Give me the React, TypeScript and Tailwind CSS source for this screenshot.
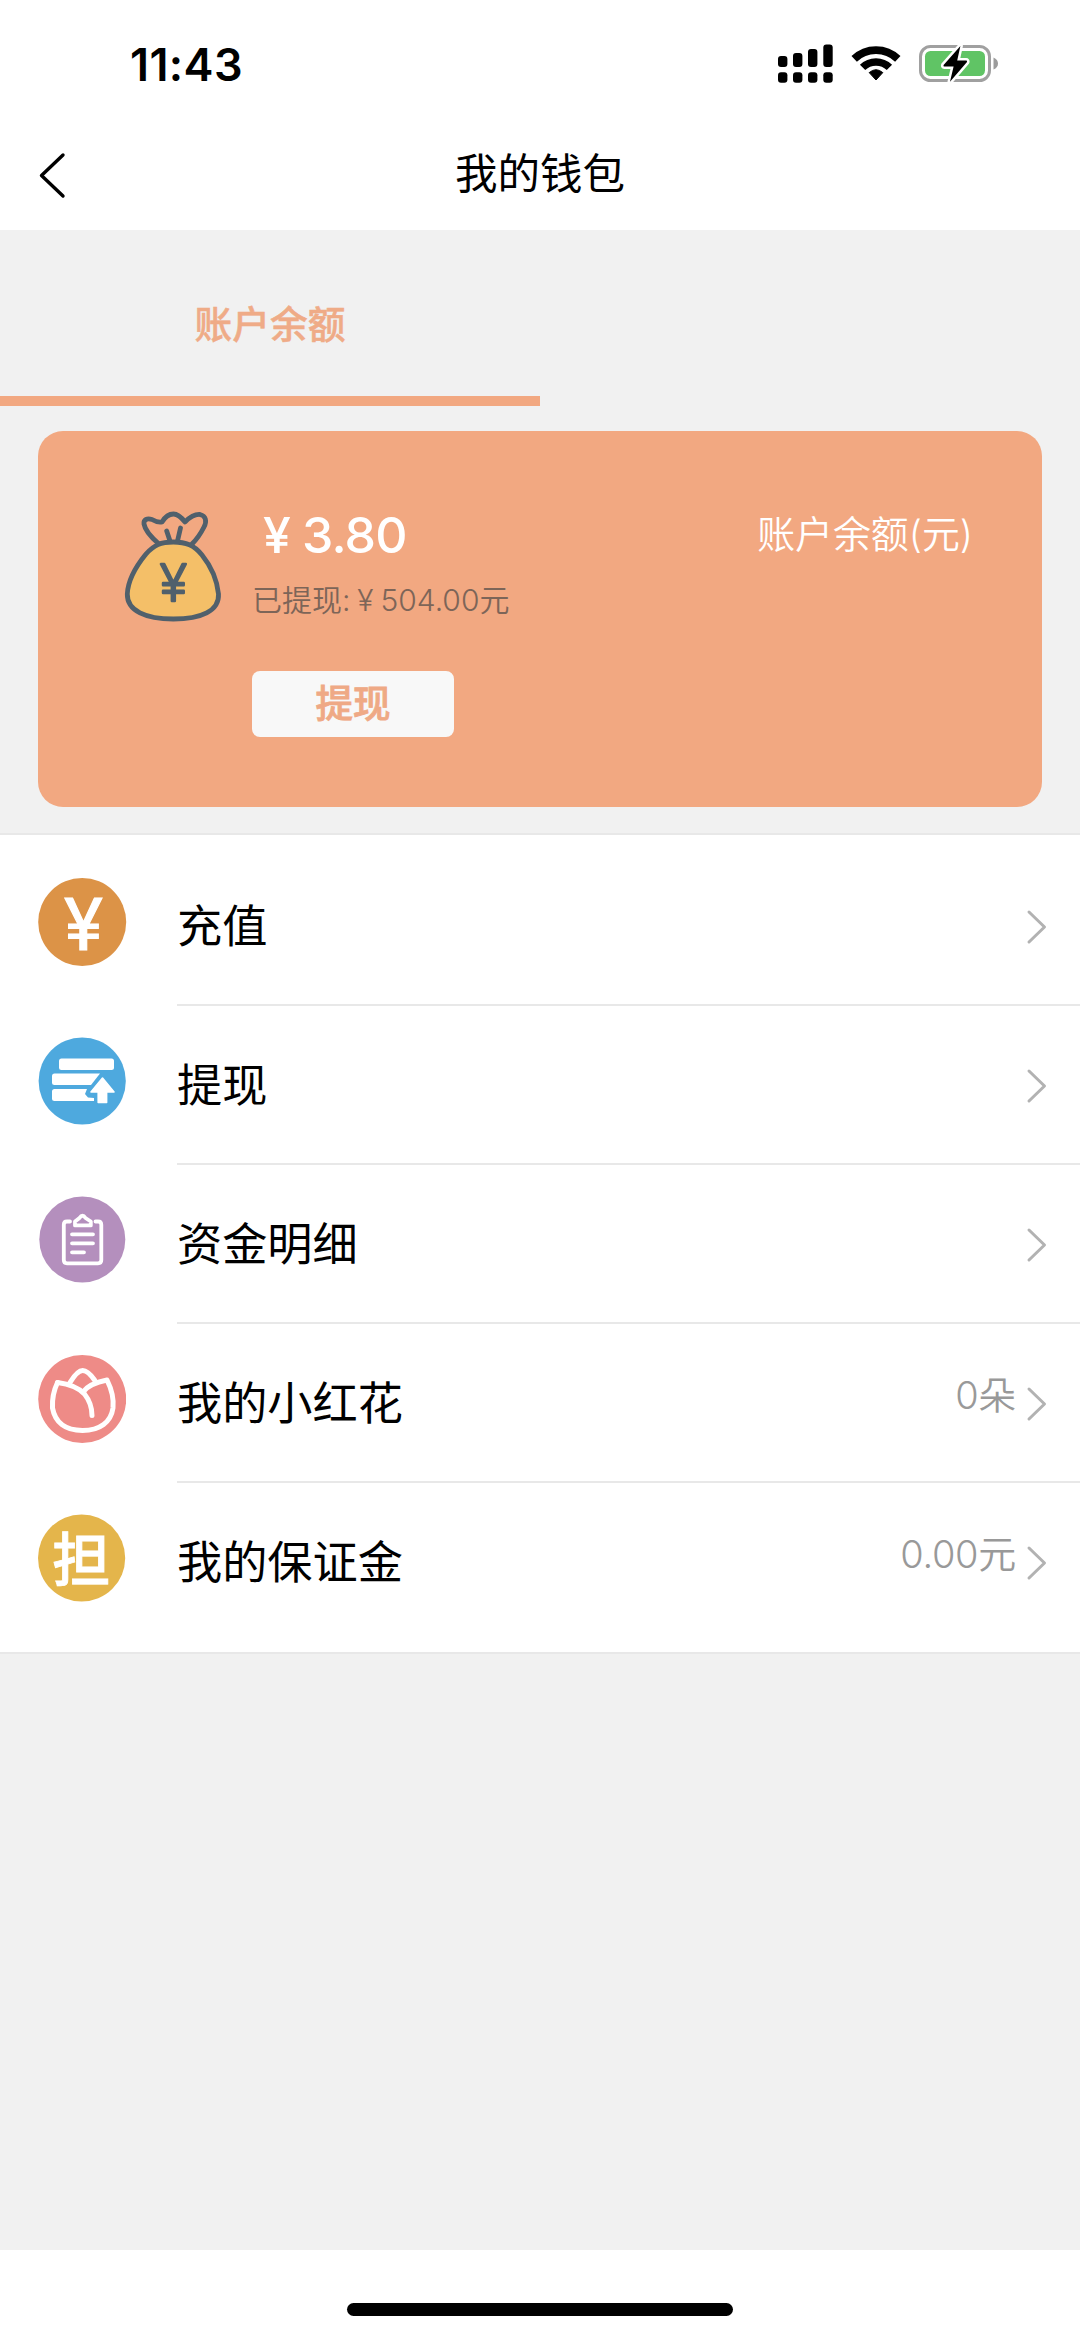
import type { ReactNode } from "react";

type WalletItem = {
  id: string;
  label: string;
  icon: ReactNode;
  value?: string;
};

function SignalIcon() {
  return (
    <svg width="56" height="40" viewBox="0 0 56 40" fill="#000">
      <rect x="0" y="12" width="9.4" height="11" rx="3" />
      <rect x="15" y="9" width="9.4" height="14" rx="3" />
      <rect x="30" y="5" width="9.4" height="18" rx="3" />
      <rect x="45.3" y="0.5" width="9.4" height="22.5" rx="3" />
      <rect x="0" y="28.3" width="9.4" height="10.4" rx="3" />
      <rect x="15" y="28.3" width="9.4" height="10.4" rx="3" />
      <rect x="30" y="28.3" width="9.4" height="10.4" rx="3" />
      <rect x="45.3" y="28.3" width="9.4" height="10.4" rx="3" />
    </svg>
  );
}

function WifiIcon() {
  return (
    <svg width="50" height="40" viewBox="0 0 50 40" fill="none" stroke="#000">
      <path d="M3.2 14.9 A31.5 31.5 0 0 1 46.8 14.9" strokeWidth="7.8" />
      <path d="M11.6 23.4 A19.2 19.2 0 0 1 38.4 23.4" strokeWidth="7.6" />
      <path
        d="M18.2 28.6 Q25 22.8 31.8 28.6 L25 36 Z"
        fill="#000"
        strokeWidth="1"
        strokeLinejoin="round"
      />
    </svg>
  );
}

function BatteryIcon() {
  return (
    <svg width="80" height="40" viewBox="0 0 80 40" fill="none">
      <rect
        x="1.5"
        y="2.5"
        width="69"
        height="34"
        rx="10"
        stroke="#a0a0a0"
        strokeWidth="3"
      />
      <rect x="6" y="7" width="60" height="25" rx="5.5" fill="#60c465" />
      <path d="M74.5 13.5 Q79 15.5 79 19.5 Q79 23.5 74.5 25.5 Z" fill="#9c9c9c" />
      <path
        d="M41.4 2 L24.6 21 Q24 22.6 25.4 22.6 L34.6 22.6 L31 37.8 L48 18 Q48.4 16.6 47 16.6 L38.2 16.6 Z"
        fill="#000"
        stroke="#fff"
        strokeWidth="5"
        strokeLinejoin="round"
        paintOrder="stroke"
      />
    </svg>
  );
}

function MoneyBagIcon() {
  return (
    <svg
      width="100"
      height="114"
      viewBox="0 0 100 114"
      fill="none"
      stroke="#50606c"
      strokeWidth="4.8"
      strokeLinecap="round"
      strokeLinejoin="round"
    >
      <path d="M35 34 C28 28 21 20 20 14 C19.5 9.5 23 8 28 9.5 Q34 13 38 12 C41 7 45 4 49.5 4 C54 4 57 7 61 12 C65 8 70 4 76 4.5 C82 6 83 11 80 17 Q75 27 68 34" />
      <path d="M42.7 21 L46 31 M56.5 18 L53.5 31" />
      <path
        d="M49.3 32 C37 32 30 35 22 44 C13 55 4 69 3.3 84 C3 101 22 109 49.3 109 C77 109 95.5 101 94.5 84 C93 69 86 55 78 45 C70 35 62 32 49.3 32 Z"
        fill="#f4bf68"
      />
      <text
        x="49.3"
        y="91"
        textAnchor="middle"
        fill="#50606c"
        strokeWidth="2.4"
        fontSize="51"
        fontWeight="300"
        className="font-['Roboto',sans-serif]"
      >
        ¥
      </text>
    </svg>
  );
}

function RechargeIcon() {
  return (
    <svg className="overflow-visible" width="88" height="88" viewBox="0 0 88 88">
      <circle cx="44.2" cy="44" r="44" fill="#dc9347" />
      <text
        x="45.4"
        y="71.5"
        textAnchor="middle"
        fill="#fff"
        stroke="#fff"
        strokeWidth="1.1"
        fontSize="73"
        fontWeight="400"
        className="font-['Roboto',sans-serif]"
      >
        ¥
      </text>
    </svg>
  );
}

function WithdrawIcon() {
  return (
    <svg width="88" height="88" viewBox="0 0 88 88" fill="#fff">
      <circle cx="44.2" cy="44" r="43.6" fill="#4ea9de" />
      <rect x="21" y="21.5" width="55" height="11.5" rx="2.5" />
      <path d="M16.5 36.5 H62 L53 48 H16.5 Q14 48 14 45.5 V39 Q14 36.5 16.5 36.5 Z" />
      <path d="M16.5 52 H49 L47 57 L50 60.5 L56 61 V64 H16.5 Q14 64 14 61.5 V54.5 Q14 52 16.5 52 Z" />
      <path
        d="M64.5 41 L76 55 H68.6 V65.5 H60.2 V55 H53 Z"
        stroke="#fff"
        strokeWidth="1.6"
        strokeLinejoin="round"
      />
    </svg>
  );
}

function DetailIcon() {
  return (
    <svg
      width="88"
      height="88"
      viewBox="0 0 88 88"
      fill="none"
      stroke="#fff"
      strokeWidth="3.8"
      strokeLinecap="round"
      strokeLinejoin="round"
    >
      <circle cx="44.3" cy="43.5" r="43" fill="#b48fbd" stroke="none" />
      <path d="M32 25.5 H29 Q25.8 25.5 25.8 28.8 V64 Q25.8 67.3 29 67.3 H60 Q63.3 67.3 63.3 64 V28.8 Q63.3 25.5 60 25.5 H57.5" />
      <path d="M37 29.4 V25.5 L41.5 22 Q44.5 17.5 47.5 22 L52.8 25.5 V29.4 Z" />
      <path d="M34 38.3 H55 M34 47.3 H55 M34 56.3 H46" />
    </svg>
  );
}

function FlowerIcon() {
  return (
    <svg
      width="88"
      height="88"
      viewBox="0 0 88 88"
      fill="none"
      stroke="#fff"
      strokeWidth="5"
      strokeLinecap="round"
      strokeLinejoin="round"
    >
      <circle cx="44.2" cy="44" r="44" fill="#ee8b87" stroke="none" />
      <path d="M19.5 27.5 C15 37 14 44 14.5 53 C17 67 27 75.5 44.5 75.5 C62 75.5 73 67 75 53 C76 43 74 35 69 25 C59 27 50 30 45 37" />
      <path d="M19.5 27.5 C31 29 40 32 46.5 39 C52 46 54 52 54 60.5" />
      <path d="M32 27.5 C36 21 41 15.5 44.7 15.5 C48.5 15.5 53 20 56.5 25" />
    </svg>
  );
}

function DepositIcon() {
  return (
    <svg className="overflow-visible" width="88" height="88" viewBox="0 0 88 88">
      <circle cx="43.6" cy="44" r="43.6" fill="#e4b54b" />
      <text
        x="43.2"
        y="66.5"
        textAnchor="middle"
        fill="#fff"
        stroke="#fff"
        strokeWidth="0.8"
        fontSize="58"
        fontWeight="500"
        className="font-['Noto_Sans_CJK_SC',sans-serif]"
      >
        担
      </text>
    </svg>
  );
}

function ArrowRight() {
  return (
    <svg
      width="22"
      height="36"
      viewBox="0 0 22 36"
      fill="none"
      stroke="#b2b2b2"
      strokeWidth="3"
      strokeLinecap="round"
    >
      <path d="M3 3 L18.5 18 L3 33" strokeLinejoin="round" />
    </svg>
  );
}

const items: WalletItem[] = [
  { id: "recharge", label: "充值", icon: <RechargeIcon /> },
  { id: "withdraw", label: "提现", icon: <WithdrawIcon /> },
  { id: "detail", label: "资金明细", icon: <DetailIcon /> },
  { id: "flower", label: "我的小红花", icon: <FlowerIcon />, value: "0朵" },
  { id: "deposit", label: "我的保证金", icon: <DepositIcon />, value: "0.00元" },
];

function StatusBar() {
  return (
    <div className="flex h-[114px] items-start justify-between pl-[130px] pr-[81px] pt-[43px]">
      <span className="text-[45px] font-semibold leading-[44px] tracking-[0.4px] text-black">
        11:43
      </span>
      <div className="flex items-center pt-px">
        <SignalIcon />
        <span className="ml-[17px]">
          <WifiIcon />
        </span>
        <span className="ml-[18px]">
          <BatteryIcon />
        </span>
      </div>
    </div>
  );
}

function BalanceCard() {
  return (
    <div className="mx-[38px] mt-[25px] flex h-[376px] rounded-[25px] bg-[#f2a881] pl-[86px] pr-[69px] pt-[79px]">
      <MoneyBagIcon />
      <div className="ml-7">
        <div className="flex text-[50px] font-medium leading-[50px] text-white">
          <span className="w-[50px] text-center">¥</span>
          <span className="tracking-[-0.8px]">3.80</span>
        </div>
        <div className="mt-6 flex text-[30px] font-[350] leading-[32px] text-[#7d6558]">
          <span>已提现:</span>
          <span className="w-[30px] text-center">¥</span>
          <span>504.00</span>
          <span>元</span>
        </div>
        <button className="mt-[55px] flex h-[66px] w-[202px] items-center justify-center rounded-[8px] bg-[#f8f8f8] text-[37.5px] font-medium text-[#efa985] [-webkit-text-stroke:0.8px_#efa985]">
          提现
        </button>
      </div>
      <span className="ml-auto text-[37.9px] font-[350] leading-[48px] text-white">
        账户余额(元)
      </span>
    </div>
  );
}

function App() {
  return (
    <div className="flex h-[2336px] w-[1080px] flex-col overflow-hidden bg-[#f1f1f1] font-['Inter','Noto_Sans_CJK_SC',sans-serif]">
      <header className="bg-white">
        <StatusBar />
        <div className="grid h-[116px] grid-cols-3 items-center">
          <svg
            className="ml-[37px] mt-[5px]"
            width="30"
            height="48"
            viewBox="0 0 30 48"
            fill="none"
            stroke="#000"
            strokeWidth="3.4"
            strokeLinecap="round"
            strokeLinejoin="round"
          >
            <path d="M26 4 L4.5 24.5 L26 45" />
          </svg>
          <h1 className="pt-1 text-center text-[42.5px] leading-none text-black">
            我的钱包
          </h1>
        </div>
      </header>

      <div className="flex h-[176px]">
        <div className="flex w-[540px] items-center justify-center border-b-[10px] border-[#f2a881] pt-[23px] text-[37.7px] font-medium text-[#efab87] [-webkit-text-stroke:0.5px_#efab87]">
          账户余额
        </div>
      </div>

      <BalanceCard />

      <ul className="mt-[26px] border-y-2 border-[#e8e8e8] bg-white pb-[10px] pt-3">
        {items.map((item, index) => (
          <li key={item.id} className="flex h-[159px] pl-[38px]">
            <div className="mr-[51px] mt-[31px] h-[88px] w-[88px]">
              {item.icon}
            </div>
            <div
              className={`flex flex-1 items-center border-b-2 pr-8 pt-[3px] ${
                index < items.length - 1
                  ? "border-[#e8e8e8]"
                  : "border-transparent"
              }`}
            >
              <span className="text-[45.2px] leading-none text-black">
                {item.label}
              </span>
              {item.value && (
                <span className="mb-[19px] ml-auto text-[38px] font-[350] leading-none tracking-[-0.3px] text-[#999]">
                  {item.value}
                </span>
              )}
              <span className={item.value ? "ml-[10px]" : "ml-auto"}>
                <ArrowRight />
              </span>
            </div>
          </li>
        ))}
      </ul>

      <footer className="mt-auto flex h-[86px] justify-center bg-white pt-[53px]">
        <div className="h-[13px] w-[386px] rounded-full bg-black" />
      </footer>
    </div>
  );
}

export default App;
